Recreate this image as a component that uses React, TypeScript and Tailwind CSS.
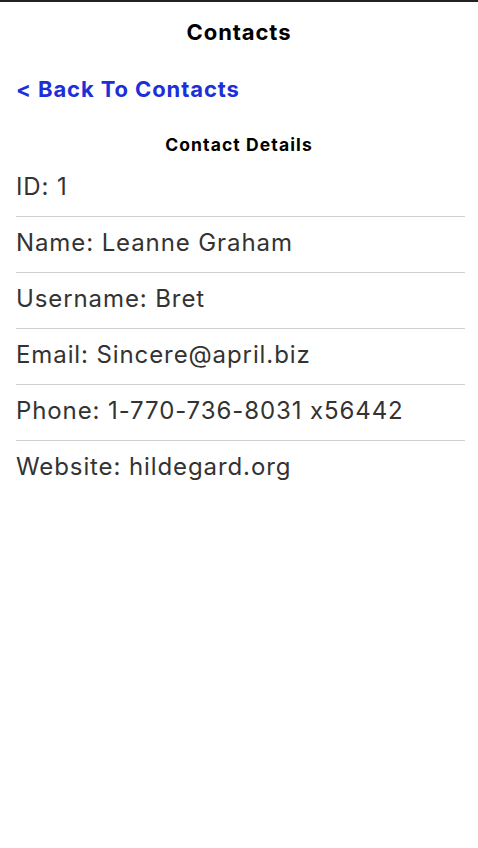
import React from "react";

const rows = [
  "ID: 1",
  "Name: Leanne Graham",
  "Username: Bret",
  "Email: Sincere@april.biz",
  "Phone: 1-770-736-8031 x56442",
  "Website: hildegard.org",
];

export default function App() {
  return (
    <div
      className="min-h-[848px] w-full bg-white [font-feature-settings:'calt'_0]"
      style={{ fontFamily: "Inter, 'Noto Sans', sans-serif" }}
    >
      <div className="h-[2px] w-full bg-[#222222]" />
      <div className="flex h-[60px] items-center justify-center">
        <h1 className="text-[22px] font-bold leading-none tracking-[0.9px] text-black">Contacts</h1>
      </div>
      <div className="px-4 pt-[13px]">
        <a href="#" className="text-[22px] font-bold leading-[28px] tracking-[0.9px] text-[#1c2fd8]">
          &lt; Back To Contacts
        </a>
      </div>
      <div className="mt-[31px] flex justify-center">
        <h2 className="text-[17.5px] font-bold leading-[22px] tracking-[1.1px] text-black">Contact Details</h2>
      </div>
      <div className="ml-4 mr-[13px] mt-[5px]">
        {rows.map((r, i) => (
          <div
            key={i}
            className={`pb-[14px] pt-[11px] text-[24px] leading-[30px] tracking-[0.9px] text-[#333333] ${
              i < rows.length - 1 ? "border-b border-[#cfcfcf]" : ""
            }`}
          >
            {r}
          </div>
        ))}
      </div>
    </div>
  );
}
